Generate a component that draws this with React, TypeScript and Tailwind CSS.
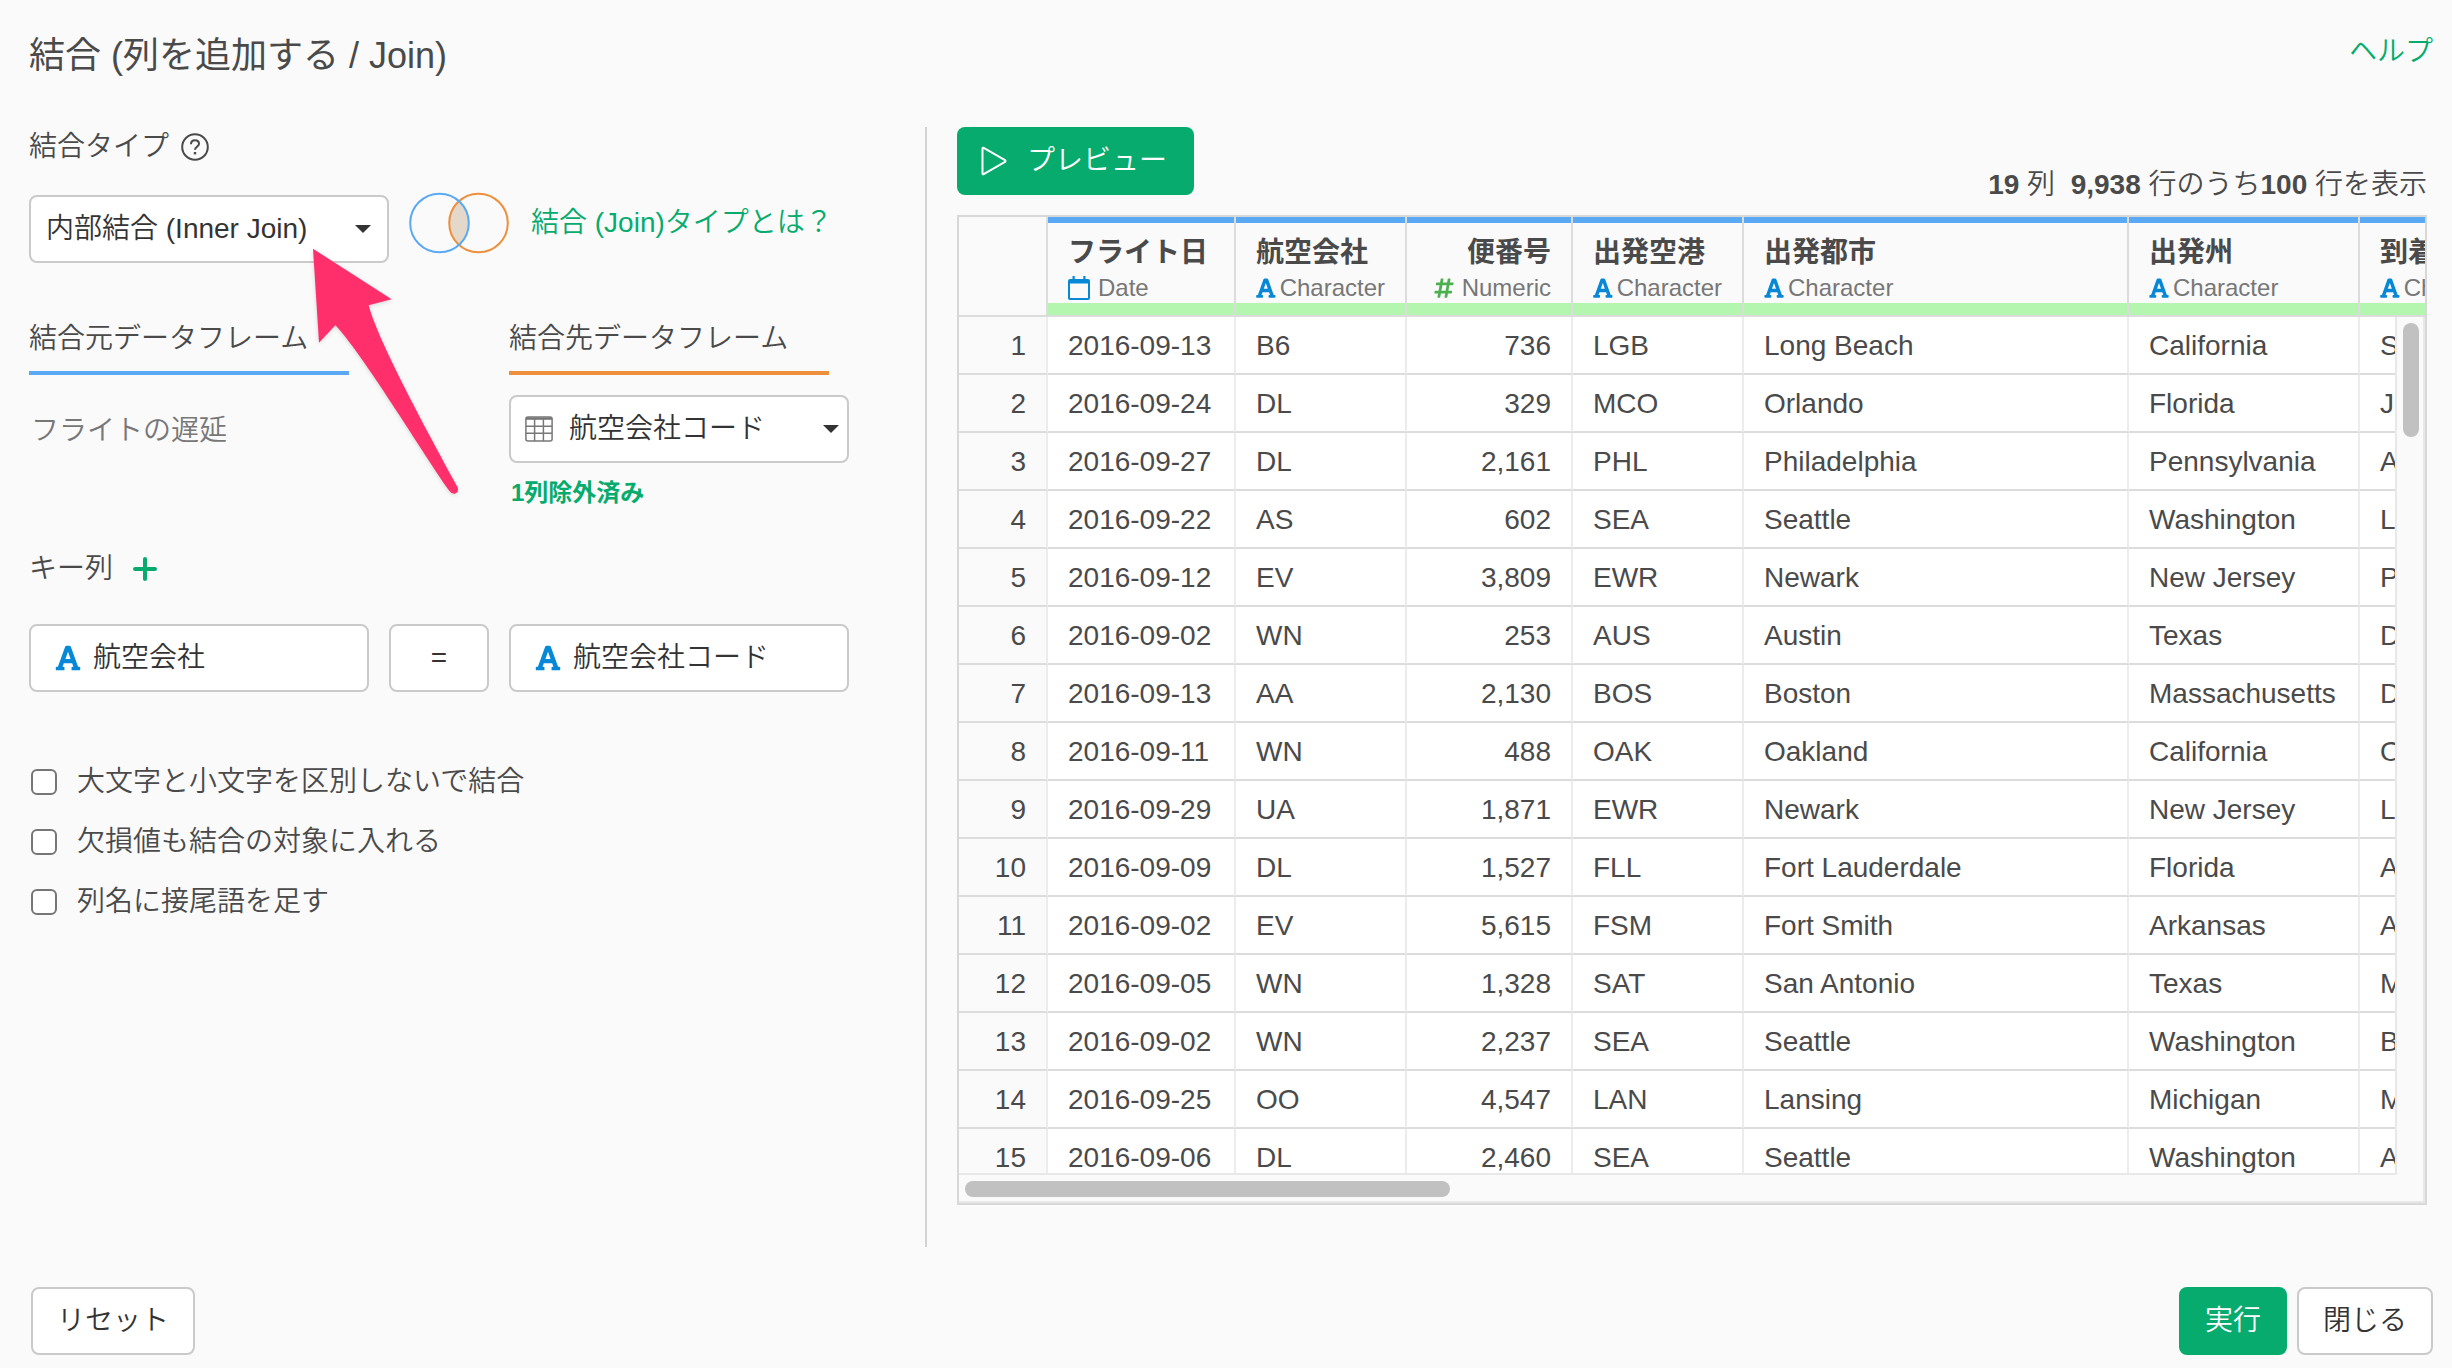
import { useState } from "react"
import type { ReactNode } from "react"
import { FaFont, FaHashtag } from "react-icons/fa"

type ColumnType = "Date" | "Character" | "Numeric"

const columns: { name: string; type: ColumnType; width: string }[] = [
  { name: "フライト日", type: "Date", width: "w-[188px]" },
  { name: "航空会社", type: "Character", width: "w-[171px]" },
  { name: "便番号", type: "Numeric", width: "w-[166px]" },
  { name: "出発空港", type: "Character", width: "w-[171px]" },
  { name: "出発都市", type: "Character", width: "w-[385px]" },
  { name: "出発州", type: "Character", width: "w-[231px]" },
  { name: "到着空港", type: "Character", width: "w-[171px]" },
]

const rows = [
  ["2016-09-13", "B6", "736", "LGB", "Long Beach", "California", "S"],
  ["2016-09-24", "DL", "329", "MCO", "Orlando", "Florida", "J"],
  ["2016-09-27", "DL", "2,161", "PHL", "Philadelphia", "Pennsylvania", "A"],
  ["2016-09-22", "AS", "602", "SEA", "Seattle", "Washington", "L"],
  ["2016-09-12", "EV", "3,809", "EWR", "Newark", "New Jersey", "P"],
  ["2016-09-02", "WN", "253", "AUS", "Austin", "Texas", "D"],
  ["2016-09-13", "AA", "2,130", "BOS", "Boston", "Massachusetts", "D"],
  ["2016-09-11", "WN", "488", "OAK", "Oakland", "California", "O"],
  ["2016-09-29", "UA", "1,871", "EWR", "Newark", "New Jersey", "L"],
  ["2016-09-09", "DL", "1,527", "FLL", "Fort Lauderdale", "Florida", "A"],
  ["2016-09-02", "EV", "5,615", "FSM", "Fort Smith", "Arkansas", "A"],
  ["2016-09-05", "WN", "1,328", "SAT", "San Antonio", "Texas", "M"],
  ["2016-09-02", "WN", "2,237", "SEA", "Seattle", "Washington", "B"],
  ["2016-09-25", "OO", "4,547", "LAN", "Lansing", "Michigan", "M"],
  ["2016-09-06", "DL", "2,460", "SEA", "Seattle", "Washington", "A"],
]

const options = ["大文字と小文字を区別しないで結合", "欠損値も結合の対象に入れる", "列名に接尾語を足す"]

const boxClass = "h-[68px] rounded-lg border-2 border-[#cacaca] bg-white text-[28px] text-[#333]"

function HelpIcon() {
  return (
    <svg viewBox="0 0 28 28" className="h-7 w-7" fill="none" stroke="#4a4a4a" strokeWidth="2">
      <circle cx="14" cy="14" r="12.8" />
      <path d="M10 11.2c0-2.4 1.7-3.9 4-3.9s4 1.4 4 3.5c0 3-4 3-4 6" />
      <path d="M14 19v2.4" strokeWidth="2.4" />
    </svg>
  )
}

function VennIcon() {
  return (
    <svg viewBox="0 0 100 62" className="h-[62px] w-[100px]" fill="none" strokeWidth="2">
      <path d="M50 9.1a29.3 29.3 0 0 1 0 43.8a29.3 29.3 0 0 1 0-43.8z" fill="#e3d8ca" />
      <circle cx="69.5" cy="31" r="29.3" stroke="#ee8f3c" />
      <circle cx="30.5" cy="31" r="29.3" stroke="#5aa9f5" />
    </svg>
  )
}

function CalendarIcon() {
  return (
    <svg viewBox="0 0 22 24" className="h-6 w-[22px]">
      <path
        fill="#0788d6"
        fillRule="evenodd"
        d="M4.5 0h2.2v3h8.6V0h2.2v3H20a2 2 0 0 1 2 2v17a2 2 0 0 1-2 2H2a2 2 0 0 1-2-2V5a2 2 0 0 1 2-2h2.500zM2 7.500V22h18V7.500z"
      />
    </svg>
  )
}

function TableIcon() {
  return (
    <svg viewBox="0 0 28 26" className="h-[26px] w-7" fill="none" stroke="#777" strokeWidth="1.500">
      <rect x="0.900" y="1" width="26.200" height="24" rx="2" />
      <path d="M1 2.600h26" strokeWidth="2.400" />
      <path d="M1 10.200h26M1 17.200h26M9.600 3v22M18.400 3v22" />
    </svg>
  )
}

function PlayIcon() {
  return (
    <svg viewBox="0 0 26 30" className="h-[30px] w-[26px]" fill="none" stroke="#fff" strokeWidth="2" strokeLinejoin="round">
      <path d="M1.500 2.500v25c0 .8.600 1 1.200.6L24 15.800c.700-.4.700-1.200 0-1.600L2.700 1.900c-.6-.4-1.200-.2-1.200.6z" />
    </svg>
  )
}

function PlusIcon() {
  return (
    <svg viewBox="0 0 24 24" className="h-6 w-6" stroke="#06ab6d" strokeWidth="4" strokeLinecap="round">
      <path d="M12 2v20M2 12h20" />
    </svg>
  )
}

function Caret() {
  return (
    <svg viewBox="0 0 16 8" className="h-2 w-4" fill="#333">
      <path d="M0 0h16L8 8z" />
    </svg>
  )
}

// Callout pointing at the join type drop-down
function PointerArrow() {
  return (
    <svg viewBox="0 0 510 810" className="pointer-events-none absolute top-[41px] left-[271px] z-10 h-[270px] w-[170px] drop-shadow-sm">
      <path
        fill="#ff2f6b"
        d="M39 38L275 190L206 208C230 300 345 520 472 752C480 768 464 780 452 769C448 765 444 760 440 754C340 606 180 345 106 268L57 320Z"
      />
    </svg>
  )
}

function TypeIcon({ type }: { type: ColumnType }) {
  if (type === "Date") return <CalendarIcon />
  if (type === "Numeric") return <FaHashtag className="h-[22px] w-5 text-[#4caf50]" />
  return <FaFont className="h-[22px] w-5 text-[#0788d6]" />
}

function KeyColumn({ children }: { children: ReactNode }) {
  return (
    <button className={`${boxClass} flex w-[340px] items-center gap-3 px-6`}>
      <FaFont className="h-7 w-[26px] text-[#0788d6]" />
      {children}
    </button>
  )
}

function JoinSettings() {
  const [checked, setChecked] = useState([false, false, false])

  const toggle = (index: number) => setChecked(checked.map((v, i) => (i === index ? !v : v)))

  return (
    <section className="w-[898px] shrink-0 border-r-2 border-[#d2d2d2]">
      <div className="flex items-center gap-3">
        <label htmlFor="join-type" className="leading-10">結合タイプ</label>
        <HelpIcon />
      </div>

      <div className="relative mt-7 flex items-start">
        <div className="relative">
          <select id="join-type" className={`${boxClass} block w-[360px] appearance-none px-[15px]`}>
            <option>内部結合 (Inner Join)</option>
          </select>
          <span className="pointer-events-none absolute inset-y-0 right-[18px] flex items-center">
            <Caret />
          </span>
        </div>
        <div className="ml-5 flex h-14 items-center gap-[22px]">
          <VennIcon />
          <a href="#join-types" className="text-[#06ab6d]">結合 (Join)タイプとは？</a>
        </div>
        <PointerArrow />
      </div>

      <div className="mt-14 grid grid-cols-[480px_340px]">
        <div>
          <h2 className="w-[320px] border-b-4 border-[#5aa9f5] pb-3 leading-10">結合元データフレーム</h2>
          <p className="mt-9 pl-0.5 leading-10 text-[#777]">フライトの遅延</p>
        </div>
        <div>
          <label htmlFor="target" className="block w-[320px] border-b-4 border-[#ee8f3c] pb-3 leading-10">
            結合先データフレーム
          </label>
          <div className="relative mt-5">
            <span className="pointer-events-none absolute inset-y-0 left-4 flex items-center">
              <TableIcon />
            </span>
            <select id="target" className={`${boxClass} block w-full appearance-none pr-10 pl-[58px]`}>
              <option>航空会社コード</option>
            </select>
            <span className="pointer-events-none absolute inset-y-0 right-[10px] flex items-center">
              <Caret />
            </span>
          </div>
          <a href="#excluded" className="mt-3.5 block pl-0.5 text-2xl leading-8 font-bold text-[#06ab6d]">1列除外済み</a>
        </div>
      </div>

      <div className="mt-10 flex items-center gap-5">
        <h2 className="leading-10">キー列</h2>
        <button aria-label="キー列を追加">
          <PlusIcon />
        </button>
      </div>
      <div className="mt-[35px] flex gap-5">
        <KeyColumn>航空会社</KeyColumn>
        <button className={`${boxClass} w-[100px]`}>=</button>
        <KeyColumn>航空会社コード</KeyColumn>
      </div>

      <div className="mt-[60px]">
        {options.map((option, index) => (
          <label key={option} className="flex h-[60px] items-center gap-5 pl-0.5">
            <input
              type="checkbox"
              checked={checked[index]}
              onChange={() => toggle(index)}
              className="h-[26px] w-[26px] appearance-none rounded-md border-2 border-[#767676] bg-white checked:bg-[#06ab6d]"
            />
            {option}
          </label>
        ))}
      </div>
    </section>
  )
}

function PreviewTable() {
  return (
    <div className="mt-5 flex min-h-0 flex-1 flex-col border-2 border-[#d8d8d8]">
      <div className="relative min-h-0 flex-1 overflow-hidden">
        <table className="w-[1572px] min-w-full table-fixed border-separate border-spacing-0">
          <thead>
            <tr>
              <th className="w-[89px] border-r-2 border-b-2 border-[#dcdcdc] p-0" />
              {columns.map((col) => (
                <th key={col.name} className={`${col.width} border-r-2 border-b-2 border-[#dcdcdc] p-0 ${col.type === "Numeric" ? "text-right" : "text-left"}`}>
                  <div className="border-t-6 border-b-12 border-t-[#5aa9f5] border-b-[#b4f6af] px-5 pt-2.5">
                    <div className="leading-10 font-bold whitespace-nowrap">{col.name}</div>
                    <div className={`flex items-center text-2xl leading-[30px] font-[350] text-[#777] ${col.type === "Numeric" ? "justify-end" : ""} ${col.type === "Character" ? "gap-1" : "gap-2"}`}>
                      <TypeIcon type={col.type} />
                      {col.type}
                    </div>
                  </div>
                </th>
              ))}
            </tr>
          </thead>
          <tbody>
            {rows.map((row, i) => (
              <tr key={i} className="h-[58px]">
                <th className="border-r-2 border-b-2 border-r-[#ececec] border-b-[#dcdcdc] pt-0.5 pr-5 pb-0 pl-0 text-right font-[350]">{i + 1}</th>
                {row.map((cell, j) => (
                  <td
                    key={j}
                    className={`border-r-2 border-b-2 border-r-[#ececec] border-b-[#dcdcdc] bg-white px-5 pt-0.5 pb-0 whitespace-nowrap ${columns[j].type === "Numeric" ? "text-right" : ""}`}
                  >
                    {cell}
                  </td>
                ))}
              </tr>
            ))}
          </tbody>
        </table>
        <div className="absolute top-[100px] right-0 bottom-0 w-[30px] border-x-2 border-[#e8e8e8] bg-[#fafafa] px-1.5 pt-1.5">
          <div className="h-[114px] w-4 rounded-full bg-[#c1c1c1]" />
        </div>
      </div>
      <div className="flex h-[30px]">
        <div className="flex-1 border-t-2 border-b-2 border-[#e8e8e8] px-1.5 pt-1.5">
          <div className="h-4 w-[34%] rounded-full bg-[#c1c1c1]" />
        </div>
        <div className="w-7 border-r-2 border-b-2 border-[#e8e8e8]" />
      </div>
    </div>
  )
}

export default function App() {
  return (
    <div className="flex h-screen flex-col bg-[#fafafa] font-['Liberation_Sans','Noto_Sans_CJK_JP',sans-serif] text-[28px] font-[350] text-[#4a4a4a]">
      <header className="flex items-start justify-between pt-8 pr-[19px] pl-[29px]">
        <h1 className="text-4xl leading-12 font-normal">結合 (列を追加する / Join)</h1>
        <a href="#help" className="leading-10 text-[#06ab6d]">ヘルプ</a>
      </header>

      <main className="mt-[47px] flex min-h-0 flex-1 pr-[25px] pl-[29px]">
        <JoinSettings />
        <section className="flex min-w-0 flex-1 flex-col pb-[42px] pl-[30px]">
          <div className="flex items-end justify-between">
            <button className="flex h-[68px] w-[237px] items-center gap-5 rounded-lg bg-[#06ab6d] pl-6 text-white">
              <PlayIcon />
              プレビュー
            </button>
            <p className="leading-5">
              <b className="font-bold">19</b> 列 &nbsp;<b className="font-bold">9,938</b> 行のうち<b className="font-bold">100</b> 行を表示
            </p>
          </div>
          <PreviewTable />
        </section>
      </main>

      <footer className="mt-10 flex gap-2.5 pr-[19px] pb-[13px] pl-[31px]">
        <button className={`${boxClass} mr-auto w-[164px]`}>リセット</button>
        <button className="h-[68px] w-[108px] rounded-lg bg-[#06ab6d] text-white">実行</button>
        <button className={`${boxClass} w-[136px]`}>閉じる</button>
      </footer>
    </div>
  )
}
